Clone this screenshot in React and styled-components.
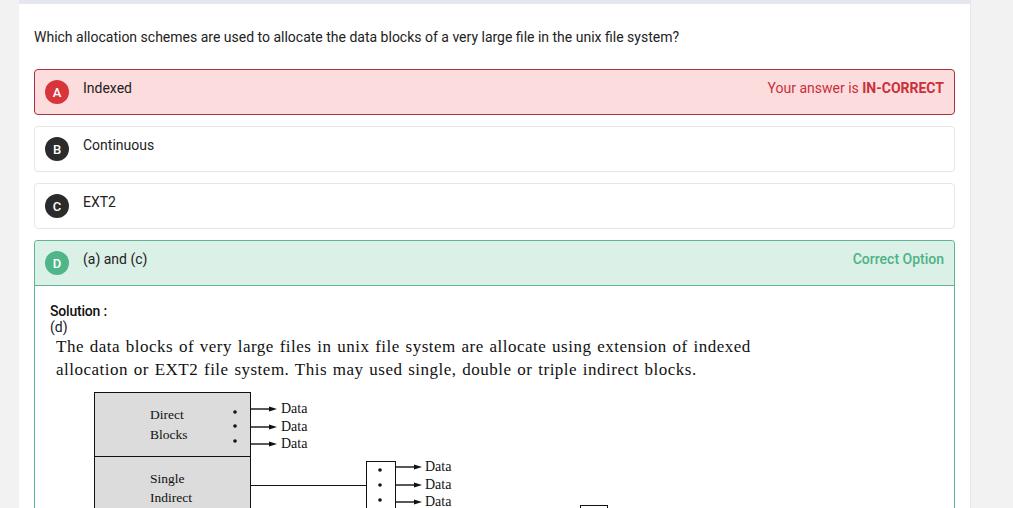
import React from "react";
import styled, { createGlobalStyle } from "styled-components";

const GlobalStyle = createGlobalStyle`
  html, body {
    margin: 0;
    padding: 0;
    background: #f2f2f3;
    font-family: Roboto, "Liberation Sans", sans-serif;
    overflow: hidden;
  }
`;

const Page = styled.div`
  display: flex;
  height: 508px;
  padding-left: 19px;
`;

const Card = styled.div`
  width: 952px;
  background: #ffffff;
  border-top: 4px solid #e5e7f0;
  border-right: 1px solid #e8e8ea;
  padding: 0 15px;
  box-sizing: border-box;
  display: flex;
  flex-direction: column;
  gap: 11px;
`;

const Question = styled.p`
  margin: 24px 0 12px;
  font-size: 14px;
  line-height: 18px;
  color: #222;
`;

const Option = styled.div`
  border: 1px solid ${(p) => p.border};
  background: ${(p) => p.bg};
  border-radius: 4px;
  overflow: hidden;
`;

const OptionHead = styled.div`
  display: flex;
  align-items: flex-start;
  height: 44px;
  padding: 0 10px 0 10px;
  background: ${(p) => p.bg || "transparent"};
  border-bottom: ${(p) => (p.divider ? `1px solid ${p.divider}` : "none")};
`;

const Badge = styled.span`
  width: 24px;
  height: 24px;
  margin-top: 10px;
  border-radius: 50%;
  background: ${(p) => p.color};
  color: #fff;
  font-size: 13px;
  font-weight: 500;
  display: flex;
  align-items: center;
  justify-content: center;
  flex-shrink: 0;
`;

const Label = styled.span`
  margin-left: 14px;
  padding-top: 9px;
  font-size: 14px;
  line-height: 18px;
  color: #222;
  flex: 1;
`;

const Status = styled.span`
  padding-top: 9px;
  font-size: 14px;
  line-height: 18px;
  color: ${(p) => p.color};
  font-weight: ${(p) => p.weight || 400};

  b {
    font-weight: 700;
  }
`;

const Solution = styled.div`
  padding: 17px 15px 0;
  background: #fff;
`;

const SolTitle = styled.div`
  font-size: 14px;
  line-height: 16px;
  font-weight: 500;
  color: #111;
  letter-spacing: -0.2px;
`;

const SolLetter = styled.div`
  font-size: 14px;
  line-height: 16px;
  color: #222;
`;

const Para = styled.p`
  margin: 0 0 0 6px;
  font-family: "Liberation Serif", "DejaVu Serif", serif;
  font-size: 17px;
  line-height: 23px;
  color: #111;
  letter-spacing: 0.5px;
  word-spacing: 1px;
  max-width: 760px;
`;

const Figure = styled.div`
  margin: 11px 0 0 44px;
`;

const Arrow = ({ x1, x2, y }) => (
  <g>
    <line x1={x1} y1={y} x2={x2 - 6} y2={y} stroke="#111" strokeWidth="1.4" />
    <polygon points={`${x2},${y} ${x2 - 8},${y - 2.5} ${x2 - 8},${y + 2.5}`} fill="#111" />
  </g>
);

const Diagram = () => (
  <svg width="560" height="130" viewBox="0 0 560 130" fontFamily="'Liberation Serif', serif" fill="#111">
    <rect x="0.5" y="0.5" width="156" height="140" fill="#dcdcdc" stroke="#111" />
    <line x1="0" y1="64.5" x2="157" y2="64.5" stroke="#111" />
    <g fontSize="13.5">
      <text x="56" y="27">Direct</text>
      <text x="56" y="47">Blocks</text>
      <text x="56" y="91">Single</text>
      <text x="56" y="110">Indirect</text>
    </g>
    {[20, 34, 49].map((y) => (
      <circle key={y} cx="141" cy={y} r="1.8" fill="#111" />
    ))}
    <g fontSize="14">
      {[17, 35, 52].map((y) => (
        <g key={y}>
          <Arrow x1={157} x2={183} y={y} />
          <text x="187" y={y + 4}>Data</text>
        </g>
      ))}
      {[75, 93, 110].map((y) => (
        <g key={y}>
          <Arrow x1={302} x2={328} y={y} />
          <text x="331" y={y + 4}>Data</text>
        </g>
      ))}
    </g>
    <line x1="157" y1="93.5" x2="272" y2="93.5" stroke="#111" />
    <rect x="272.5" y="69.5" width="29" height="70" fill="#fff" stroke="#111" />
    {[78, 93, 108].map((y) => (
      <circle key={y} cx="286" cy={y} r="1.8" fill="#111" />
    ))}
    <rect x="486.5" y="113.5" width="27" height="30" fill="#fff" stroke="#111" />
  </svg>
);

const options = [
  { key: "A", text: "Indexed", state: "wrong" },
  { key: "B", text: "Continuous" },
  { key: "C", text: "EXT2" },
];

const App = () => (
  <>
    <GlobalStyle />
    <Page>
      <Card>
        <Question>
          Which allocation schemes are used to allocate the data blocks of a very large file in the unix file system?
        </Question>
        {options.map((o) =>
          o.state === "wrong" ? (
            <Option key={o.key} border="#a8303f" bg="#fddcdd">
              <OptionHead>
                <Badge color="#d8343c">{o.key}</Badge>
                <Label>{o.text}</Label>
                <Status color="#c8303a">
                  Your answer is <b>IN-CORRECT</b>
                </Status>
              </OptionHead>
            </Option>
          ) : (
            <Option key={o.key} border="#e6e6e8" bg="#fff">
              <OptionHead>
                <Badge color="#2b2b2b">{o.key}</Badge>
                <Label>{o.text}</Label>
              </OptionHead>
            </Option>
          )
        )}
        <Option border="#5fb593" bg="#fff" style={{ flex: 1, borderBottom: "none", borderRadius: "4px 4px 0 0" }}>
          <OptionHead bg="#dbf0e7" divider="#5fb593">
            <Badge color="#4fb68a">D</Badge>
            <Label>(a) and (c)</Label>
            <Status color="#4db384" weight={500}>
              Correct Option
            </Status>
          </OptionHead>
          <Solution>
            <SolTitle>Solution :</SolTitle>
            <SolLetter>(d)</SolLetter>
            <Para>
              The data blocks of very large files in unix file system are allocate using extension of indexed
              allocation or EXT2 file system. This may used single, double or triple indirect blocks.
            </Para>
            <Figure>
              <Diagram />
            </Figure>
          </Solution>
        </Option>
      </Card>
    </Page>
  </>
);

export default App;
